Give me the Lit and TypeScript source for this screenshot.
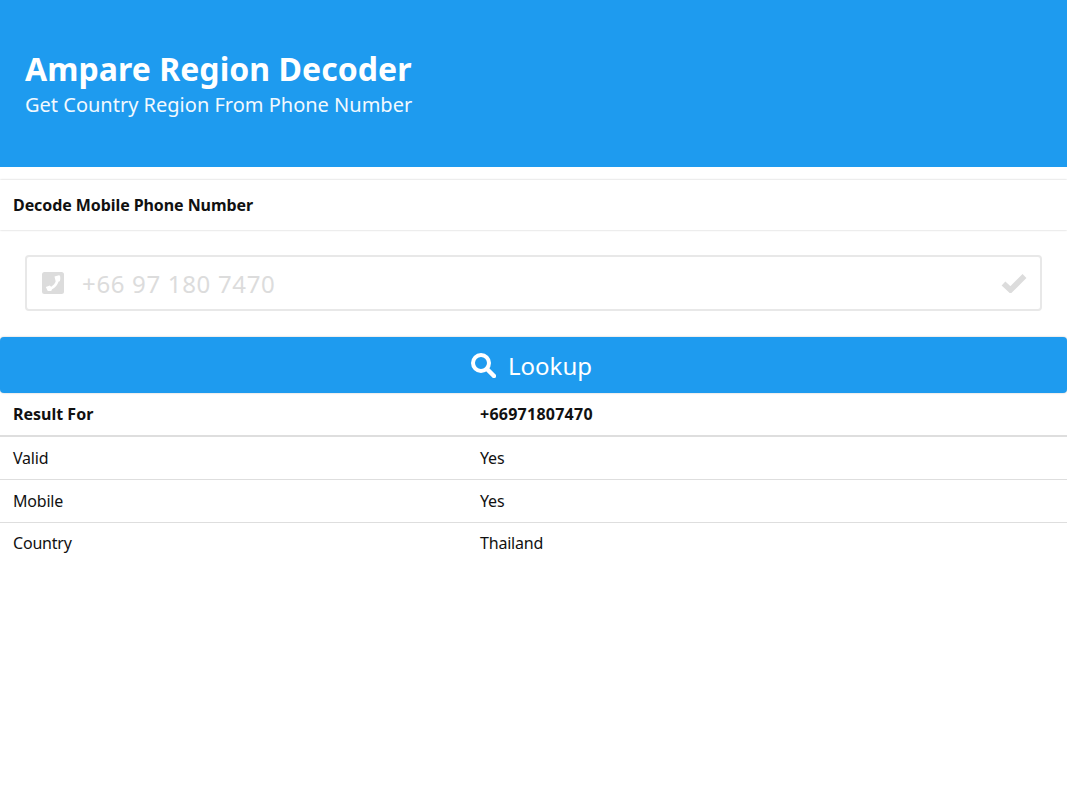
import { LitElement, html, css } from "lit";
import { customElement } from "lit/decorators.js";

@customElement("app-root")
export class AppRoot extends LitElement {
  static styles = css`
    :host { display: block; font-family: "Noto Sans", "Open Sans", sans-serif; color: #111; background: #fff; min-height: 800px; }
    .hero { height: 167px; box-sizing: border-box; background: #1e9bef; color: #fff; padding: 47px 25px 0; }
    h1 { margin: 0; font-size: 32px; line-height: 44px; font-weight: 700; letter-spacing: 0.05px; }
    .sub { font-size: 20px; line-height: 28px; font-weight: 400; color: #f2f9fe; }
    .section { margin-top: 13px; height: 50px; box-sizing: border-box; box-shadow: 0 0 2px rgba(0,0,0,.22); padding: 0 13px; display: flex; align-items: center; font-size: 16px; font-weight: 700; letter-spacing: -0.08px; }
    .form { padding: 25px 25px 26px; }
    .input { height: 56px; box-sizing: border-box; border: 2px solid #e8e8e8; border-radius: 4px; display: flex; align-items: center; padding: 0 13px 0 15px; gap: 18px; color: #dcdcdc; font-size: 24px; letter-spacing: 0.67px; }
    .input span { flex: 1; }
    .lookup { height: 56px; box-sizing: border-box; background: #1e9bef; border-radius: 4px; color: #fff; display: flex; align-items: center; justify-content: center; gap: 12px; padding-right: 5px; font-size: 24px; box-shadow: 0 0 2px rgba(0,0,0,.25); }
    .row { display: grid; grid-template-columns: 467px 1fr; height: 43px; align-items: center; padding-left: 13px; font-size: 16px; letter-spacing: -0.2px; border-bottom: 1px solid #dedede; box-sizing: border-box; }
    .row.head { font-weight: 700; height: 44px; padding-bottom: 1px; border-bottom: 2px solid #dedede; letter-spacing: 0; }
    .row.last { border-bottom-color: transparent; padding-bottom: 2px; }
    .num { letter-spacing: 0.25px; }
    svg { display: block; flex: none; }
  `;
  render() {
    const rows = [["Valid", "Yes"], ["Mobile", "Yes"], ["Country", "Thailand"]];
    return html`
      <div class="hero">
        <h1>Ampare Region Decoder</h1>
        <div class="sub">Get Country Region From Phone Number</div>
      </div>
      <div class="section">Decode Mobile Phone Number</div>
      <div class="form">
        <div class="input">
          <svg width="22" height="22" viewBox="0 0 22 22">
            <rect width="22" height="22" rx="2.500" fill="#dcdcdc"/>
            <path fill="none" stroke="#fff" stroke-width="2.600" d="M6 17C11.500 16.500 16.500 11 15.500 5"/>
            <path fill="#fff" d="M12.500 4.500l4.500-1.200 1 .5c.5 2 .4 4-.2 5.500l-4 .7zM3.800 15l4-1.500 2.500 2.500-1 3h-3.500z"/>
          </svg>
          <span>+66 97 180 7470</span>
          <svg width="26" height="20" viewBox="0 0 26 20"><path fill="none" stroke="#dcdcdc" stroke-width="5.500" d="M2.500 10.500l7 6.500L23.500 3"/></svg>
        </div>
      </div>
      <div class="lookup">
        <svg width="26" height="26" viewBox="0 0 26 26"><circle cx="11" cy="11" r="8" fill="none" stroke="#fff" stroke-width="4"/><path d="M17 17l7 7" stroke="#fff" stroke-width="4.500" stroke-linecap="round"/></svg>
        <span>Lookup</span>
      </div>
      <div class="row head"><div>Result For</div><div class="num">+66971807470</div></div>
      ${rows.map((r, i) => html`<div class="row ${i === 2 ? "last" : ""}"><div>${r[0]}</div><div>${r[1]}</div></div>`)}
    `;
  }
}
